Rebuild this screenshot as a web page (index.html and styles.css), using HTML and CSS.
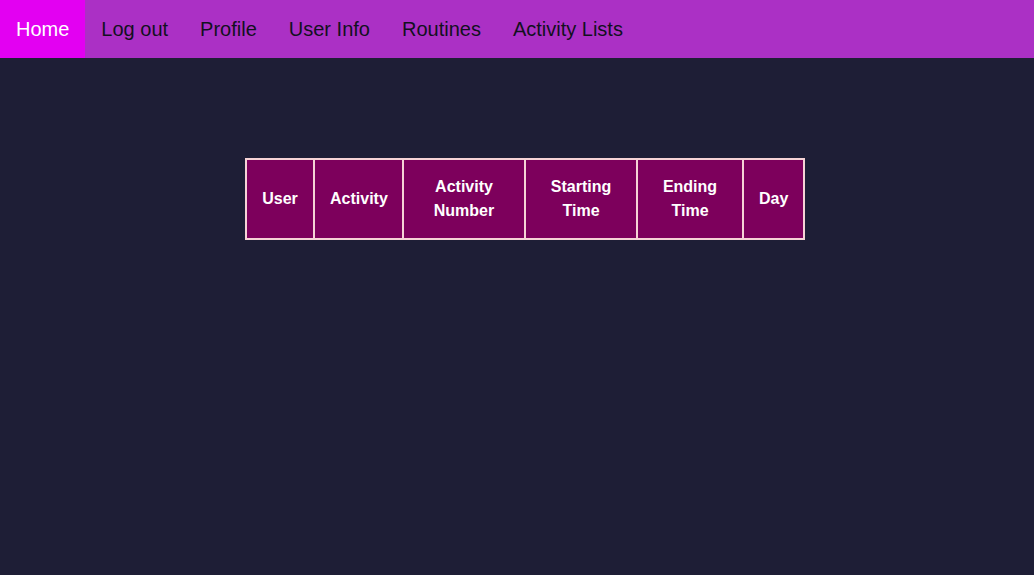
FILE: index.html
```html
<!DOCTYPE html>
<html>
<head>
<meta charset="utf-8">
<link rel="stylesheet" href="styles.css">
</head>
<body>
<nav class="topnav">
  <a class="active" href="#">Home</a>
  <a href="#">Log out</a>
  <a href="#">Profile</a>
  <a href="#">User Info</a>
  <a href="#">Routines</a>
  <a href="#">Activity Lists</a>
</nav>
<main class="content">
  <table class="activities">
    <thead>
      <tr>
        <th class="c-user">User</th>
        <th class="c-activity">Activity</th>
        <th class="c-number">Activity Number</th>
        <th class="c-start">Starting Time</th>
        <th class="c-end">Ending Time</th>
        <th class="c-day">Day</th>
      </tr>
    </thead>
  </table>
</main>
</body>
</html>
```
FILE: styles.css
```css
html, body {
  margin: 0;
  padding: 0;
  height: 100%;
}
body {
  background: #1e1e36;
  font-family: "Liberation Sans", Arial, sans-serif;
}
.topnav {
  display: flex;
  background: #ab30c5;
  height: 58px;
}
.topnav a {
  display: block;
  padding: 17px 16px;
  font-size: 20px;
  line-height: 24px;
  color: #12101e;
  text-decoration: none;
}
.topnav a.active {
  background: #e300f2;
  color: #ffffff;
}
.content {
  padding: 100px 0 0 16px;
  display: flex;
  justify-content: center;
}
.activities {
  border-collapse: separate;
  border-spacing: 0;
  border: 2px solid #f6d3d6;
  table-layout: fixed;
  width: 560px;
}
.activities th {
  background: #7d005c;
  color: #ffffff;
  font-size: 16px;
  font-weight: bold;
  line-height: 24px;
  padding: 15px;
  text-align: center;
  vertical-align: middle;
  border-right: 2px solid #f6d3d6;
}
.activities th:last-child {
  border-right: none;
}
.c-user { width: 36px; }
.c-activity { width: 57px; }
.c-number { width: 90px; }
.c-start { width: 80px; }
.c-end { width: 74px; }
.c-day { width: 29px; }
```
